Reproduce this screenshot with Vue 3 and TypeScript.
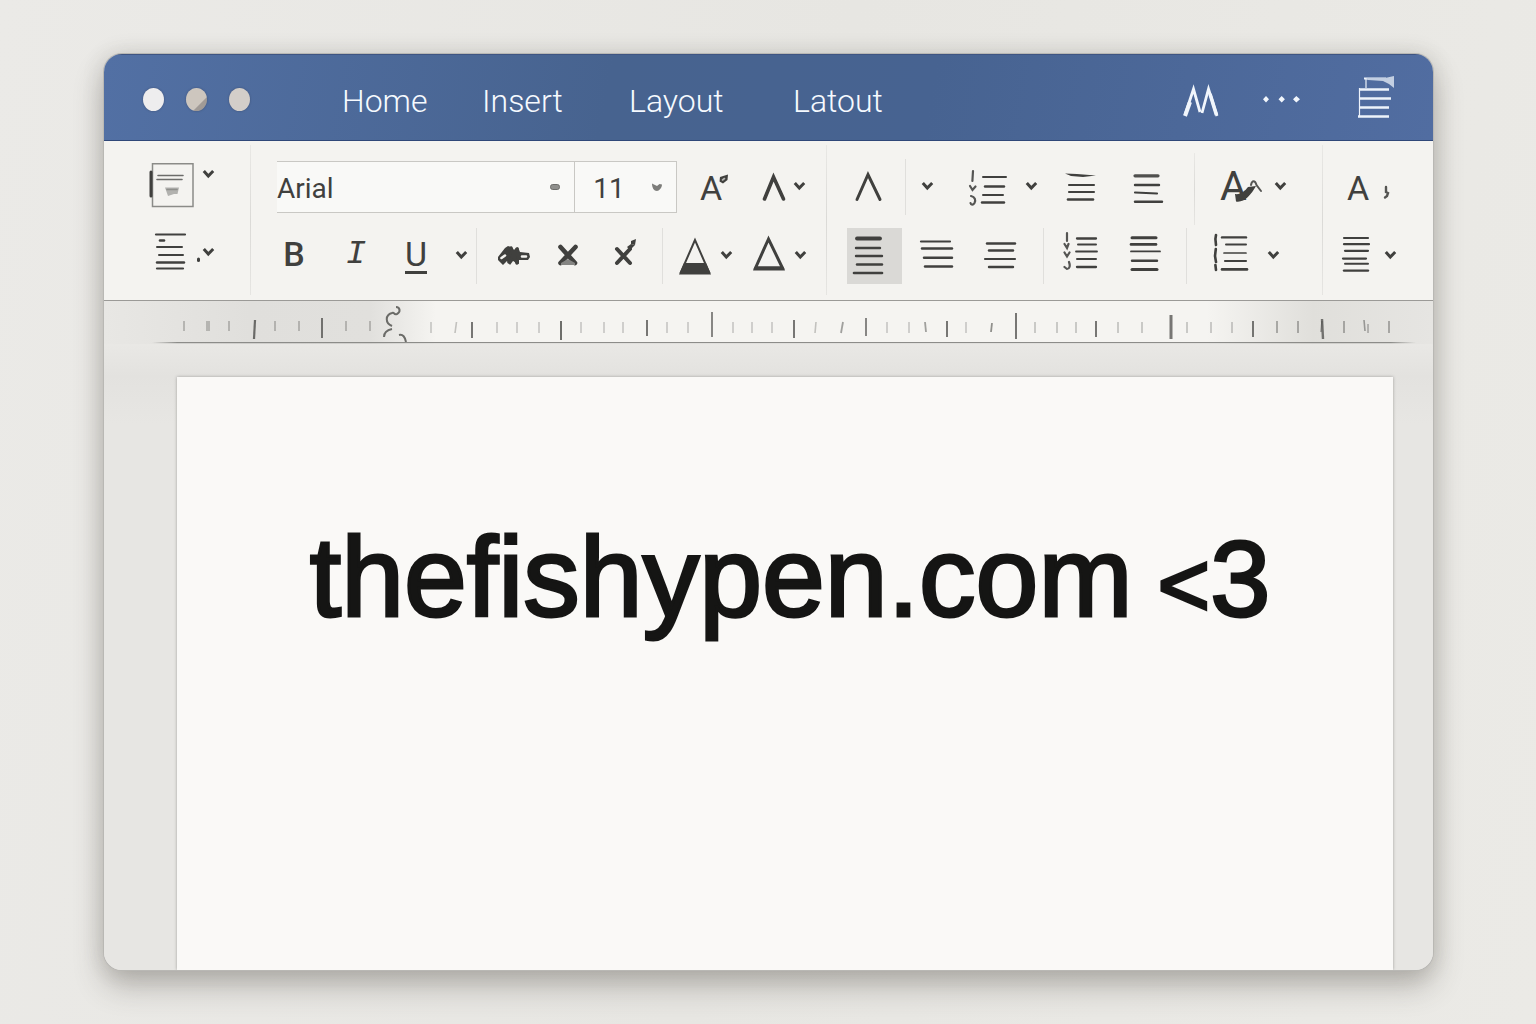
<script setup lang="ts">
import { ref } from 'vue'

interface Stroke {
  d: string
  w?: number
  fill?: boolean
  tone?: string
}
interface Letter {
  t: string
  x: number
  y: number
  size: number
  weight: number
}
interface Icon {
  w: number
  strokes: Stroke[]
  letter?: Letter
}
interface Tool {
  id: string
  label: string
  icon?: string
  text?: string
  caret?: boolean
}

const ink = '#40403e'

const lines = (w: number, rows: [number, number, number, number][], extra: Stroke[] = []): Icon => ({
  w,
  strokes: [...rows.map(([x1, x2, y, t]) => ({ d: `M${x1} ${y}H${x2}`, w: t })), ...extra],
})

const icons: Record<string, Icon> = {
  paste: {
    w: 48,
    strokes: [
      { d: 'M3.5 .8H44V43.5H3.5Z', w: 1.5, tone: '#8b8b88' },
      { d: 'M2 9V33', w: 3 },
      { d: 'M9 12.5H34M8 16.5H33', w: 1.6, tone: '#6c6c6a' },
      { d: 'M16 24.5H30L28.5 31H25L19 33Z', fill: true, tone: '#b2b2af' },
      { d: 'M18 26.5H28', w: 1.6, tone: '#8f8f8c' },
    ],
  },
  styles: lines(
    48,
    [[7, 36, 2.5, 2.2], [11, 15, 8.5, 2.6], [8, 33, 15, 2], [10, 34, 23, 2], [8, 35, 30.5, 2.4], [8, 34, 36.5, 2.2]],
    [{ d: 'M49.5 27V28.5', w: 3 }],
  ),
  grow: {
    w: 30,
    letter: { t: 'A', x: 0, y: 37, size: 34, weight: 400 },
    strokes: [
      { d: 'M20 14L28 11.5L27.5 17L23 20.5L19.5 18.5Z', fill: true },
      { d: 'M22.5 17L24.5 15.5', w: 1.6, tone: '#b5b5b2' },
    ],
  },
  shrink: { w: 24, strokes: [{ d: 'M2.5 36L11.5 14L21.5 36', w: 3.6 }] },
  clear: { w: 28, strokes: [{ d: 'M3 36.5L14 11.5L26 36.5', w: 3 }] },
  strike: {
    w: 34,
    strokes: [
      { d: 'M1 25L8 16L11 14L14 15L17 18L21 15L23 20L32 21L33 25L31 28L22 28L22 32L16 29L13 33L10 29L6 33L1 28Z', fill: true },
      { d: 'M4.5 26L8 23.5M25 24.5H29', w: 2.6, tone: '#f4f3f0' },
      { d: 'M14 16L20 31M20 17L12 30', w: 3.4 },
    ],
  },
  sub: {
    w: 22,
    strokes: [
      { d: 'M3.5 15L18 31M18.5 15L3.5 31', w: 4.6 },
      { d: 'M4 31L11 27L18 31V33L4 33Z', fill: true, tone: '#858583' },
    ],
  },
  sup: {
    w: 24,
    strokes: [
      { d: 'M5 17L18 31M18 17L5 31', w: 4 },
      { d: 'M15 15L19 12L23 13L18 18Z', fill: true },
      { d: 'M19 9L24 7L23 13L19 12Z', fill: true },
    ],
  },
  fontColor: {
    w: 34,
    strokes: [
      { d: 'M16 8L2 40H30Z', w: 2 },
      { d: 'M5 31H27L32 42.5H0Z', fill: true },
    ],
  },
  highlight: {
    w: 34,
    strokes: [
      { d: 'M15.5 7L2.5 36H29.5Z', w: 3 },
      { d: 'M2 34.5H30L32 38.5H0Z', fill: true },
    ],
  },
  checklist: lines(40, [[15, 38, 14, 2], [17, 36, 23.5, 2.4], [15, 35, 32, 2], [14, 36, 39.5, 2.4]], [
    { d: 'M5 8L4.4 18M2 23L4.5 27L7.5 23.5M3 33C7 34 8 37 6.5 40C5 42.5 3 42 2.5 40', w: 2.2, tone: '#555553' },
  ]),
  outdent: {
    w: 36,
    strokes: [
      { d: 'M2 10.5L14 11L33 12.5L20 14L8 13Z', fill: true },
      { d: 'M6 22H31M6 29H31', w: 2.1 },
      { d: 'M5 36.5H30', w: 2.6 },
    ],
  },
  indent: {
    w: 36,
    strokes: [
      { d: 'M5 12.8H28', w: 3.2, tone: '#50504e' },
      { d: 'M5 22H29', w: 2.4 },
      { d: 'M5 29.5L27 30.5', w: 2.2 },
      { d: 'M5 38.8H32', w: 2.4 },
    ],
  },
  alignLeft: lines(55, [[10, 33, 6.5, 3.8], [9, 33, 16, 2.4], [9, 35, 24, 2.4], [10, 35, 32.5, 2.4], [7, 35, 41, 2.6]]),
  alignCenter: lines(40, [[4, 33, 9.5, 2.2], [5, 35, 16.5, 2.4], [7, 35, 25.8, 2.4], [8, 35, 34.5, 2.4]]),
  alignRight: lines(40, [[6, 34, 11.5, 2.4], [8, 32, 18.5, 2.4], [4, 34, 27, 2.2], [8, 32, 35, 2.4]]),
  tasks: lines(38, [[14, 33, 6.5, 2.3], [15, 33, 12.5, 2], [13, 34, 19.5, 1.8], [14, 33, 27, 2], [14, 33, 35, 2.3]], [
    { d: 'M4 1V9M1.5 12L4 16L5.5 12M1.5 20.5L4 24.5L6.5 20.5M2 30.5M6 30C7.5 34 6.5 37 4 37L1.5 35', w: 2.2, tone: '#555553' },
  ]),
  justify: lines(36, [[4, 28, 5.8, 3], [3, 28, 12.4, 2.6], [3, 32, 19.4, 1.8], [4, 29, 28.7, 2.4], [4, 29, 37.4, 3]]),
  effects: {
    w: 42,
    letter: { t: 'A', x: 0, y: 37, size: 41, weight: 400 },
    strokes: [
      { d: 'M15 31C20 32 25 28 28 24L36 23C31 32 24 40 16 38.5Z', fill: true },
      { d: 'M31 22C32 17 35 17 36.5 22L41 28', w: 2, tone: '#555553' },
    ],
  },
  spacing: lines(37, [[9, 33, 5.4, 2.4], [13, 33, 12.4, 2], [11, 33, 21, 1.7], [12, 33, 29, 2.1], [9, 34, 37.4, 2.6]], [
    { d: 'M3 3L2.4 7L3 13M2.8 17L2 24L3 30M2.4 33L3 38', w: 2.6 },
  ]),
  textBox: {
    w: 42,
    letter: { t: 'A', x: 0, y: 37, size: 34, weight: 400 },
    strokes: [{ d: 'M39 24V29L41 30L40 33L38 34.5', w: 2.4, tone: '#555553' }],
  },
  columns: lines(32, [[4, 28, 6, 2.2], [4, 29, 12.2, 2.2], [5, 28, 18.8, 2.2], [3, 26, 26.6, 2.2], [5, 28, 31.8, 2], [4, 28, 38.6, 2.4]]),
}

const left1: Tool[] = [{ id: 'paste', label: 'Paste', icon: 'paste', caret: true }]
const left2: Tool[] = [{ id: 'styles', label: 'Styles', icon: 'styles', caret: true }]
const font1: Tool[] = [
  { id: 'grow', label: 'Grow font', icon: 'grow' },
  { id: 'shrink', label: 'Shrink font', icon: 'shrink', caret: true },
]
const font2: Tool[] = [
  { id: 'bold', label: 'Bold', text: 'B' },
  { id: 'italic', label: 'Italic', text: 'I' },
  { id: 'underline', label: 'Underline', text: 'U' },
  { id: 'ulmore', label: 'Underline style', caret: true },
  { id: 'strike', label: 'Strikethrough', icon: 'strike' },
  { id: 'sub', label: 'Subscript', icon: 'sub' },
  { id: 'sup', label: 'Superscript', icon: 'sup' },
  { id: 'color', label: 'Font color', icon: 'fontColor', caret: true },
  { id: 'highlight', label: 'Highlight', icon: 'highlight', caret: true },
]
const para1: Tool[] = [
  { id: 'clear', label: 'Clear formatting', icon: 'clear' },
  { id: 'clearmore', label: 'More formatting', caret: true },
  { id: 'checklist', label: 'Bulleted list', icon: 'checklist', caret: true },
  { id: 'outdent', label: 'Decrease indent', icon: 'outdent' },
  { id: 'indent', label: 'Increase indent', icon: 'indent' },
]
const para2: Tool[] = [
  { id: 'alignLeft', label: 'Align left', icon: 'alignLeft' },
  { id: 'alignCenter', label: 'Center', icon: 'alignCenter' },
  { id: 'alignRight', label: 'Align right', icon: 'alignRight' },
  { id: 'tasks', label: 'Numbered list', icon: 'tasks' },
  { id: 'justify', label: 'Justify', icon: 'justify' },
]
const effect1: Tool[] = [{ id: 'effects', label: 'Text effects', icon: 'effects', caret: true }]
const effect2: Tool[] = [{ id: 'spacing', label: 'Line spacing', icon: 'spacing', caret: true }]
const end1: Tool[] = [{ id: 'textBox', label: 'Text box', icon: 'textBox' }]
const end2: Tool[] = [{ id: 'columns', label: 'Columns', icon: 'columns', caret: true }]

const groups: { name: string; rows: Tool[][] }[] = [
  { name: 'clipboard', rows: [left1, left2] },
  { name: 'font', rows: [font1, font2] },
  { name: 'paragraph', rows: [para1, para2] },
  { name: 'effect', rows: [effect1, effect2] },
  { name: 'end', rows: [end1, end2] },
]

const tabs = ['Home', 'Insert', 'Layout', 'Latout']
const family = ref('Arial')
const size = ref('11')
const align = ref('alignLeft')

/* x, top, bottom, stroke width, opacity, lean */
type Tick = [number, number, number, number, number, number]
const minor = (xs: number[], top: number, bottom: number, o: number): Tick[] =>
  xs.map((x) => [x, top, bottom, 1.6, o, 0])
const ticks: Tick[] = [
  ...minor([80, 103, 105, 125, 171, 195, 242, 266], 20, 30, 0.38),
  ...minor([327, 393, 413, 435, 477, 500, 519, 563, 584, 629, 648, 668, 783, 805, 862], 21, 32, 0.28),
  ...minor([931, 953, 972, 1014, 1038, 1083, 1107, 1128], 21, 32, 0.32),
  ...minor([1173, 1194, 1240, 1285], 20, 32, 0.5),
  [351, 21, 32, 1.6, 0.3, -1.5],
  [711, 21, 32, 1.6, 0.3, -1],
  [737, 21, 32, 1.8, 0.5, -2],
  [822, 21, 31, 1.8, 0.5, 1],
  [887, 22, 31, 1.8, 0.6, -1],
  [150, 19, 38, 2.2, 0.8, -1],
  [218, 17, 37, 2, 0.75, 0],
  [368, 21, 37, 2, 0.75, 0],
  [457, 20, 39, 2, 0.8, 0],
  [543, 19, 35, 2, 0.75, 0],
  [608, 11, 36, 2, 0.65, 0],
  [690, 19, 37, 2, 0.75, 0],
  [762, 17, 35, 2, 0.65, 0],
  [843, 20, 36, 2, 0.75, 0],
  [912, 12, 38, 2, 0.75, 0],
  [992, 20, 36, 2, 0.75, 0],
  [1067, 14, 38, 3, 0.75, 0],
  [1149, 20, 36, 2, 0.75, 0],
  [1219, 18, 38, 2.4, 0.75, 1],
  [1217, 20, 31, 1.6, 0.5, -1],
  [1261, 19, 30, 1.6, 0.5, 1],
  [1264, 23, 32, 1.6, 0.4, 0],
]
</script>

<template>
  <main class="desk">
    <section class="window">
      <header class="titlebar">
        <div class="lights">
          <button class="light close" aria-label="Close"></button>
          <button class="light minimize" aria-label="Minimize"></button>
          <button class="light zoom" aria-label="Zoom"></button>
        </div>
        <nav class="tabs">
          <a v-for="t in tabs" :key="t" href="#" @click.prevent>{{ t }}</a>
        </nav>
        <div class="actions">
          <button aria-label="Markup">
            <svg width="36" height="48" viewBox="0 0 36 48" fill="none" stroke="#f1f6fc">
              <path d="M2 41L10.5 15L17 38" stroke-width="2.8" />
              <path d="M2 42L7 28" stroke-width="4" />
              <path d="M19 39L25.5 15L34 42" stroke-width="2.8" />
              <path d="M27 20L33.5 41" stroke-width="3.6" />
            </svg>
          </button>
          <button class="more" aria-label="More">
            <svg width="38" height="48" viewBox="0 0 38 48" fill="#f1f6fc">
              <path d="M3 22L6 25.2L3 28.4L0 25.2ZM18.7 22L21.9 25.2L18.7 28.4L15.5 25.2ZM33.3 22L37 25.2L33.3 28.4L30 25.2Z" />
            </svg>
          </button>
          <button aria-label="Notebook">
            <svg width="38" height="48" viewBox="0 0 38 48" fill="none" stroke="#edf3fb">
              <path d="M1.5 14V43M8 4V14" stroke-width="1.2" />
              <path d="M1 15.5H31M2 24.5H33M2 33.5H31M0 42.5H31" stroke-width="2.6" />
              <path d="M6 4.5H28" stroke-width="2.2" />
              <path d="M8 4L27 4L36 2V14L31 10L25 7L10 6Z" fill="#c3cfe2" stroke="none" />
            </svg>
          </button>
        </div>
      </header>

      <div class="ribbon">
        <div v-for="g in groups" :key="g.name" class="group" :class="g.name">
          <div v-for="(row, i) in g.rows" :key="i" class="row" :class="'row' + (i + 1)">
            <div v-if="g.name === 'font' && i === 0" class="combos">
              <label class="combo family">
                <select v-model="family" aria-label="Font">
                  <option>Arial</option>
                </select>
                <svg width="12" height="8" viewBox="0 0 12 8">
                  <rect x="1.5" y="1.5" width="9" height="5" rx="2.2" fill="#8f8f8c" stroke="#6d6d6a" />
                </svg>
              </label>
              <label class="combo size">
                <select v-model="size" aria-label="Font size">
                  <option>11</option>
                </select>
                <svg width="12" height="10" viewBox="0 0 12 10">
                  <path d="M1 1.5L4 3L6 4L8.5 2L11 2.5C11 6 8 9 6 9C3 9 1 6 1 1.5Z" fill="#7d7d7a" />
                </svg>
              </label>
            </div>
            <button
              v-for="t in row"
              :key="t.id"
              class="tool"
              :class="[t.id, { active: t.id === align }]"
              :aria-label="t.label"
              @click="t.id.startsWith('align') && (align = t.id)"
            >
              <span v-if="t.text" class="glyph">{{ t.text }}</span>
              <svg
                v-if="t.icon"
                class="icon"
                :width="icons[t.icon].w"
                height="48"
                :viewBox="`0 0 ${icons[t.icon].w} 48`"
                fill="none"
                stroke-linecap="round"
              >
                <text
                  v-if="icons[t.icon].letter"
                  :x="icons[t.icon].letter!.x"
                  :y="icons[t.icon].letter!.y"
                  :font-size="icons[t.icon].letter!.size"
                  :font-weight="icons[t.icon].letter!.weight"
                  :fill="ink"
                >{{ icons[t.icon].letter!.t }}</text>
                <path
                  v-for="(s, k) in icons[t.icon].strokes"
                  :key="k"
                  :d="s.d"
                  :fill="s.fill ? (s.tone ?? ink) : 'none'"
                  :stroke="s.fill ? 'none' : (s.tone ?? ink)"
                  :stroke-width="s.w"
                />
              </svg>
              <svg v-if="t.caret" class="caret" width="13" height="10" viewBox="0 0 13 10" fill="none">
                <path d="M1.8 1L6.3 6L11.2 1" stroke="#40403e" stroke-width="3" />
              </svg>
            </button>
          </div>
        </div>
      </div>

      <div class="ruler">
        <svg width="100%" height="43" viewBox="0 0 1329 43" preserveAspectRatio="none" fill="none">
          <defs>
            <linearGradient id="baseline">
              <stop offset="0" stop-color="#8c8c89" stop-opacity="0" />
              <stop offset=".02" stop-color="#8c8c89" />
              <stop offset=".98" stop-color="#8c8c89" />
              <stop offset="1" stop-color="#8c8c89" stop-opacity="0" />
            </linearGradient>
          </defs>
          <path
            v-for="(k, n) in ticks"
            :key="n"
            :d="`M${k[0] - k[5]} ${k[1]}L${k[0]} ${k[2]}`"
            stroke="#4c4c4a"
            :stroke-width="k[3]"
            :stroke-opacity="k[4]"
          />
          <g stroke="#6b6b68" stroke-width="2">
            <path d="M292 6C296 6 297 11 293 13C289 14 291 11 288 12C281 14 281 22 288 25" />
            <path d="M288 28C283 29 280 32 280 36M295 34C299 33 301 36 302 41" />
          </g>
          <rect x="48" y="41" width="1264" height="1.2" fill="url(#baseline)" />
        </svg>
      </div>

      <div class="canvas">
        <article class="sheet">
          <h1>thefishypen.com<span class="heart"> &lt;</span><span class="three">3</span></h1>
        </article>
      </div>
    </section>
  </main>
</template>

<style>
body {
  margin: 0;
  background: #e9e8e4;
}
</style>

<style scoped>
.desk {
  box-sizing: border-box;
  min-height: 100vh;
  padding: 54px 103px 54px 104px;
  display: flex;
  font-family: Roboto, 'Liberation Sans', sans-serif;
  color: #40403e;
  background: linear-gradient(100deg, #ebeae7, #e7e6e2 50%, #ebeae6);
}
button {
  margin: 0;
  padding: 0;
  border: 0;
  background: none;
  color: inherit;
  font: inherit;
}
svg {
  display: block;
  flex: none;
  overflow: visible;
}
.window {
  flex: 1;
  min-width: 0;
  display: flex;
  flex-direction: column;
  border-radius: 18px;
  overflow: hidden;
  background: #e7e6e3;
  box-shadow:
    0 0 0 1px #b9b8b4,
    0 0 22px rgba(70, 66, 58, 0.16),
    0 16px 30px rgba(70, 66, 58, 0.32);
}
.titlebar {
  box-sizing: border-box;
  height: 87px;
  display: flex;
  align-items: center;
  padding: 0 37px 0 39px;
  background: linear-gradient(100deg, #5270a4, #47638f 38%, #476391 62%, #516da1);
  border-bottom: 1px solid #2f4778;
  border-top: 1px solid #3f5582;
}
.lights {
  display: flex;
  gap: 22px;
}
.light {
  width: 21px;
  height: 23px;
  margin-top: 4px;
  border-radius: 50%;
  box-shadow: 0 0 2px rgba(40, 45, 70, 0.5);
}
.close {
  background: #eeedee;
}
.minimize {
  background: linear-gradient(135deg, #cdc6be 66%, #a09a96 70%);
}
.zoom {
  background: #d3cec9;
}
.tabs {
  margin-left: 92px;
  padding-top: 6px;
  display: grid;
  grid-template-columns: 140px 147px 164px auto;
}
.tabs a {
  color: #f6faff;
  font-size: 32px;
  line-height: 40px;
  font-weight: 300;
  text-decoration: none;
}
.actions {
  margin-left: auto;
  display: flex;
  align-items: center;
  gap: 44px;
}
.more {
  margin-right: 13px;
}
.ribbon {
  display: grid;
  grid-template-columns: 146fr 576fr 368fr 128fr 111fr;
  padding: 12px 0 9px;
  background: #f4f3f0;
  border-bottom: 1px solid #9b9a97;
}
.group {
  position: relative;
  display: grid;
  grid-template-rows: 68px 70px;
  min-width: 0;
}
.group + .group::before {
  content: '';
  position: absolute;
  left: 0;
  top: -8px;
  bottom: -4px;
  width: 1px;
  background: linear-gradient(#e9e8e5, #dbdad7 50%, #e6e5e2);
}
.group.effect::before {
  top: 0;
  bottom: 66px;
}
.row {
  display: grid;
  align-items: center;
  min-width: 0;
}
.tool {
  height: 56px;
  display: flex;
  align-items: center;
  justify-content: center;
  gap: 7px;
  min-width: 0;
}
.icon text {
  font-family: Roboto, sans-serif;
}
.clipboard .row {
  grid-template-columns: 43fr 70fr 33fr;
}
.clipboard .tool {
  grid-column: 2;
  gap: 5px;
}
.clipboard .row1 .caret {
  margin-bottom: 24px;
}
.clipboard .row2 .caret {
  margin-bottom: 6px;
}
.font .row1 {
  grid-template-columns: 27fr 400fr 76fr 62fr 11fr;
}
.font .row2 {
  grid-template-columns: 12fr 64fr 60fr 60fr 30fr 74fr 36fr 76fr 86fr 63fr 15fr;
}
.font .row2 .tool:first-child {
  grid-column: 2;
}
.paragraph .row1 {
  grid-template-columns: 5fr 74fr 44fr 108fr 48fr 86fr 3fr;
}
.paragraph .row2 {
  grid-template-columns: 21fr 55fr 70fr 71fr 76fr 68fr 7fr;
}
.paragraph .tool:first-child {
  grid-column: 2;
}
.effect .row1 {
  grid-template-columns: 118fr 10fr;
}
.effect .row2 {
  grid-template-columns: 104fr 24fr;
}
.end .row {
  grid-template-columns: 92fr 19fr;
}
.strike,
.color,
.clearmore,
.tasks {
  border-left: 1px solid #e0dfdc;
}
.justify {
  border-right: 1px solid #e0dfdc;
  padding-right: 14px;
}
.alignRight {
  padding-right: 13px;
}
.checklist,
.spacing {
  gap: 17px;
}
.effects,
.columns {
  gap: 12px;
}
.active {
  background: #dad9d6;
}
.glyph {
  height: 40px;
  font-size: 34px;
  line-height: 36px;
  font-weight: 500;
}
.italic .glyph {
  font-family: 'Liberation Mono', monospace;
  font-style: italic;
  font-weight: 400;
}
.underline .glyph {
  height: 33px;
  line-height: 32px;
  font-weight: 400;
  border-bottom: 3px solid #40403e;
}
.combos {
  grid-column: 2;
  display: grid;
  grid-template-columns: 298fr 102fr;
  height: 50px;
  background: #f9f9f7;
  border: solid #c9c8c4;
  border-width: 1px 1px 1px 0;
}
.combo {
  display: flex;
  align-items: center;
  padding-right: 13px;
  min-width: 0;
}
.combo + .combo {
  border-left: 1px solid #c9c8c4;
  padding-left: 18px;
}
.combo select {
  appearance: none;
  flex: 1;
  min-width: 0;
  height: 48px;
  padding: 4px 0 0;
  border: 0;
  background: none;
  color: #40403e;
  font: 400 28px / 40px Roboto, sans-serif;
}
.ruler {
  height: 43px;
  background: linear-gradient(
    90deg,
    #e8e7e4,
    #e0dfdc 11%,
    #e1e0dd 20%,
    #f5f4f1 25%,
    #f5f4f1 83%,
    #e0dfdb 91%,
    #e6e5e2
  );
}
.canvas {
  flex: 1;
  display: flex;
  padding: 33px 40px 0 73px;
  background: linear-gradient(#e9e8e5, #e3e2df 32px, #e7e6e3 80px);
}
.sheet {
  flex: 1;
  min-width: 0;
  background: #faf9f7;
  box-shadow: 0 0 3px rgba(60, 60, 55, 0.4);
}
h1 {
  margin: 134px 0 0;
  padding-left: 10px;
  text-align: center;
  font: 400 113px / 132px 'Liberation Sans', Arial, sans-serif;
  font-variant-ligatures: none;
  -webkit-text-stroke: 3px #151514;
  color: #151514;
  white-space: nowrap;
}
.heart {
  font-size: 90px;
}
.three {
  font-size: 108px;
}
</style>
